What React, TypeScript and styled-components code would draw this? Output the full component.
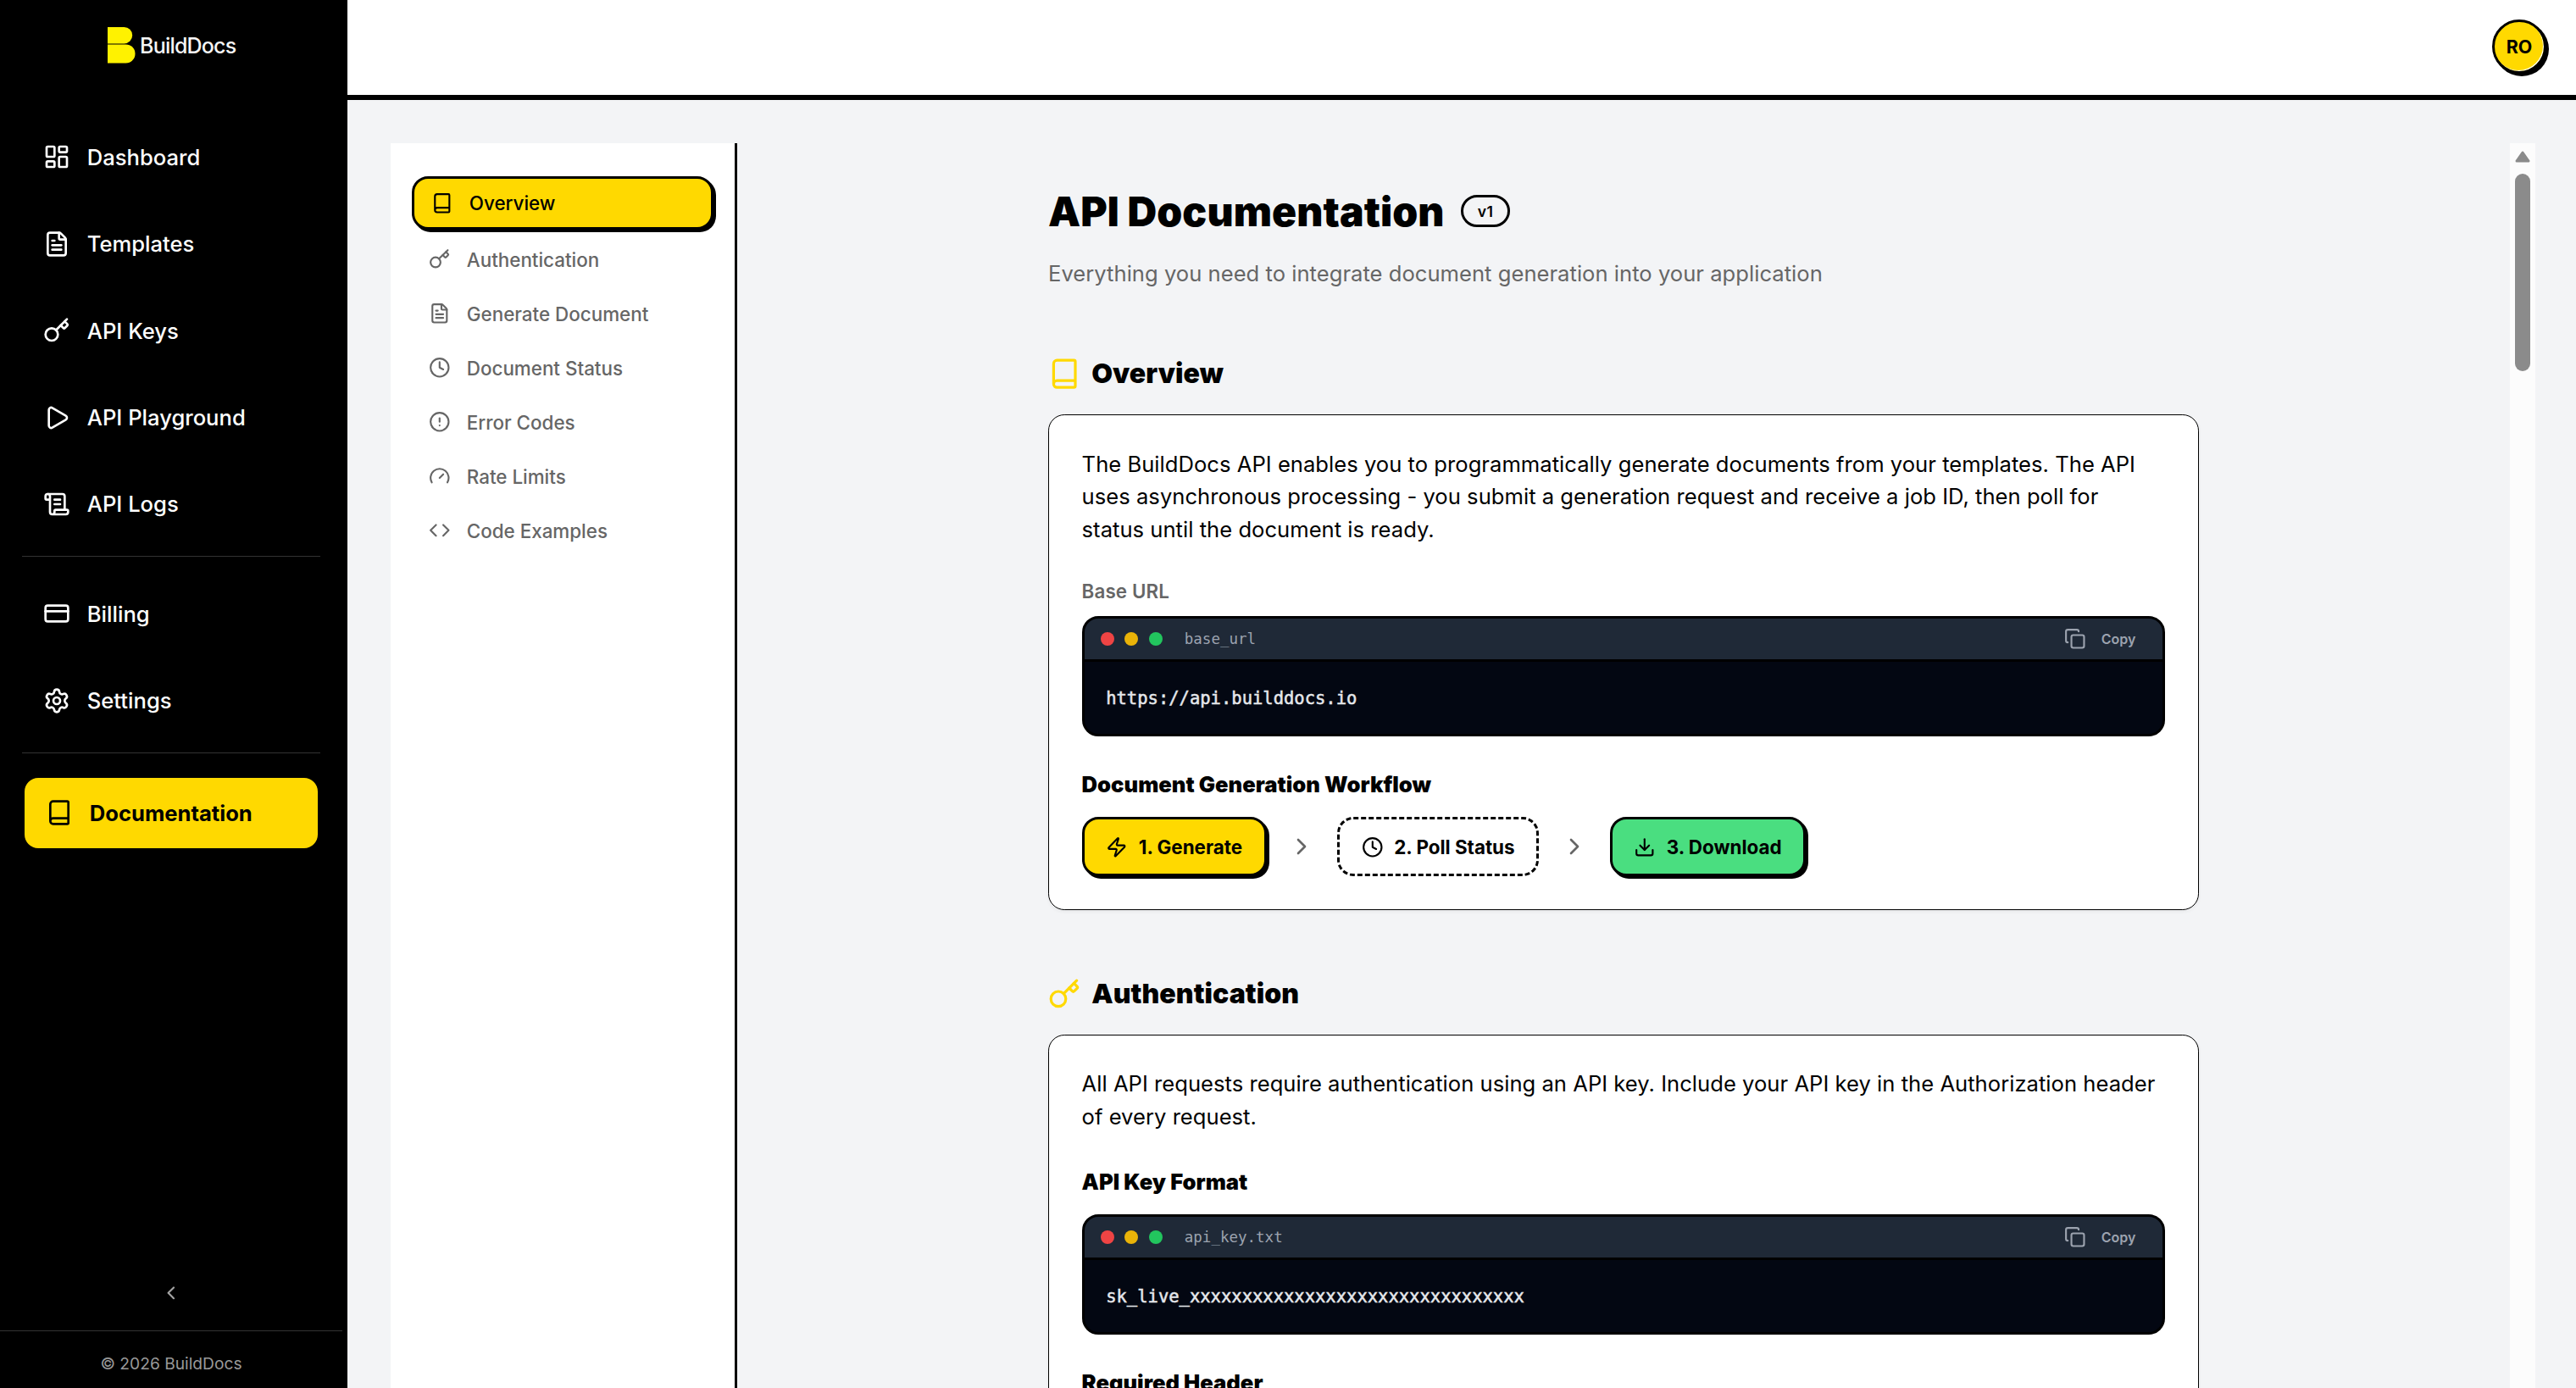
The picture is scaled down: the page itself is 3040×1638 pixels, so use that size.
import React from 'react'
import styled, { createGlobalStyle } from 'styled-components';
import {
  LayoutDashboard,
  FileText,
  Key,
  Play,
  ScrollText,
  CreditCard,
  Settings,
  Book,
  ChevronLeft,
  ChevronRight,
  Clock,
  CircleAlert,
  Gauge,
  Code,
  Copy,
  Zap,
  Download,
} from 'lucide-react';

const GlobalStyle = createGlobalStyle`
  * {
    box-sizing: border-box;
  }
  body {
    margin: 0;
    font-family: Inter, sans-serif;
    font-size: 25.6px;
    color: #000;
    background: #f3f4f6;
  }
  h1, h2, h3, p {
    margin: 0;
  }
  svg {
    flex-shrink: 0;
  }
`;

const Layout = styled.div`
  display: flex;
  height: 1638px;
  overflow: hidden;
`;

/* sidebar */
const Sidebar = styled.aside`
  width: 410px;
  flex-shrink: 0;
  display: flex;
  flex-direction: column;
  background: #000;
  color: #fff;
  border-right: 6px solid #000;
`;
const Brand = styled.div`
  display: flex;
  align-items: center;
  justify-content: center;
  gap: 5.5px;
  height: 107px;
  padding-left: 1px;
  font-size: 25px;
  font-weight: 500;
  letter-spacing: -0.8px;
  color: #f5f5f5;
`;
const Menu = styled.nav`
  flex-grow: 1;
  display: flex;
  flex-direction: column;
  gap: 19.2px;
  padding: 36.8px 26px 0;
`;
const MenuItem = styled.a<{ $active?: boolean }>`
  display: flex;
  align-items: center;
  flex-shrink: 0;
  gap: 20.2px;
  height: ${(p) => (p.$active ? '89px' : '83.2px')};
  padding: 0 24.6px;
  border: ${(p) => (p.$active ? '3px solid #000' : 'none')};
  border-radius: 19.2px;
  background: ${(p) => (p.$active ? '#ffd900' : 'transparent')};
  color: ${(p) => (p.$active ? '#000' : '#fff')};
  font-weight: ${(p) => (p.$active ? 700 : 500)};
`;
const MenuDivider = styled.div`
  height: 1px;
  flex-shrink: 0;
  margin-bottom: 6.9px;
  background: #333;
`;
const Collapse = styled.div`
  display: flex;
  justify-content: center;
  padding-bottom: 31px;
  color: #a3a3a3;
`;
const Copyright = styled.div`
  height: 68px;
  padding-top: 22px;
  border-top: 1px solid #333;
  font-size: 19.2px;
  line-height: 32px;
  text-align: center;
  color: #999;
`;

/* page */
const Page = styled.div`
  flex-grow: 1;
  min-width: 0;
  display: flex;
  flex-direction: column;
`;
const TopBar = styled.header`
  display: flex;
  align-items: center;
  justify-content: flex-end;
  flex-shrink: 0;
  height: 118px;
  padding: 0 35px 2px 0;
  background: #fff;
  border-bottom: 6px solid #000;
`;
const Avatar = styled.div`
  display: flex;
  align-items: center;
  justify-content: center;
  width: 64px;
  height: 64px;
  border: 3px solid #000;
  border-radius: 50%;
  box-shadow: 3px 3px 0 #000, inset -1px -1px 0 #fff;
  background: #ffd900;
  font-size: 21.4px;
  font-weight: 700;
`;
const Main = styled.main`
  flex-grow: 1;
  min-height: 0;
  display: flex;
  padding: 51px 48px 0 51px;
`;
const DocsNav = styled.nav`
  width: 409px;
  flex-shrink: 0;
  display: flex;
  flex-direction: column;
  gap: 6.4px;
  padding: 39px 25px 0;
  background: #fff;
  border-right: 3px solid #000;
`;
const DocsLink = styled.a<{ $active?: boolean }>`
  display: flex;
  align-items: center;
  flex-shrink: 0;
  gap: 19.2px;
  height: ${(p) => (p.$active ? '63px' : '57.6px')};
  padding: 0 20px;
  border: ${(p) => (p.$active ? '3px solid #000' : 'none')};
  border-radius: 19.2px;
  box-shadow: ${(p) => (p.$active ? '3px 3px 0 #000' : 'none')};
  background: ${(p) => (p.$active ? '#ffd900' : 'transparent')};
  color: ${(p) => (p.$active ? '#000' : '#666')};
  font-size: 22.4px;
  font-weight: 500;
`;
const Scroller = styled.div`
  flex-grow: 1;
  min-width: 0;
  height: 1469px;
  overflow: hidden;
`;
const Content = styled.div`
  width: 1358px;
  margin: 0 auto;
  padding-top: 51.6px;
`;
const ScrollTrack = styled.div`
  width: 30px;
  flex-shrink: 0;
  display: flex;
  flex-direction: column;
  align-items: center;
  gap: 13px;
  padding-top: 9px;
  background: #fcfcfc;
`;
const ScrollThumb = styled.div`
  width: 18px;
  height: 233px;
  border-radius: 9px;
  background: #8b8b8b;
`;

/* content */
const TitleRow = styled.div`
  display: flex;
  align-items: center;
  gap: 19.2px;
`;
const Title = styled.h1`
  font-size: 48px;
  line-height: 57.6px;
  font-weight: 900;
  letter-spacing: 0.08px;
`;
const Badge = styled.span`
  display: flex;
  align-items: center;
  height: 38px;
  padding: 0 17px;
  border: 3px solid #000;
  border-radius: 19px;
  font-size: 17.6px;
  font-weight: 600;
  letter-spacing: 0.4px;
`;
const Subtitle = styled.p`
  margin-top: 25.6px;
  line-height: 38.4px;
  letter-spacing: 0.02px;
  color: #666;
`;
const Section = styled.section`
  margin-top: 76.8px;
`;
const SectionTitle = styled.h2`
  display: flex;
  align-items: center;
  gap: 12.8px;
  font-size: 32px;
  line-height: 44.8px;
  font-weight: 900;
  letter-spacing: 0.06px;
  margin-bottom: 25.6px;
`;
const Card = styled.div`
  padding: 38.4px 38.6px;
  background: #fff;
  border: 1px solid #000;
  border-radius: 19.2px;
  box-shadow: 0 2px 4px rgba(0, 0, 0, 0.05);
`;
const Text = styled.p`
  line-height: 38.4px;
  letter-spacing: 0.02px;
`;
const Label = styled.div`
  margin: 38.4px 0 12.8px;
  font-size: 22.4px;
  line-height: 32px;
  font-weight: 600;
  letter-spacing: 0.1px;
  color: #666;
`;
const SubTitle = styled.h3`
  margin: 38.6px 0 18.7px;
  font-size: 25.6px;
  line-height: 38.4px;
  font-weight: 900;
`;
const CodeBox = styled.div`
  overflow: hidden;
  border: 3px solid #000;
  border-radius: 19.2px;
  background: #030712;
`;
const CodeHeader = styled.div`
  display: flex;
  align-items: center;
  height: 51px;
  padding: 0 32px 0 19px;
  background: #1f2937;
  border-bottom: 3px solid #000;
  color: #9ca3af;
`;
const Dots = styled.div`
  display: flex;
  gap: 12.8px;
  margin-right: 25.6px;
`;
const Dot = styled.span<{ $color: string }>`
  width: 16px;
  height: 16px;
  border-radius: 50%;
  background: ${(p) => p.$color};
`;
const FileName = styled.span`
  flex-grow: 1;
  font-family: 'DejaVu Sans Mono', monospace;
  font-size: 17.5px;
  line-height: 26px;
`;
const CopyButton = styled.div`
  display: flex;
  align-items: center;
  gap: 18px;
  font-size: 16px;
  font-weight: 600;
`;
const CodeBody = styled.div`
  height: 84.6px;
  padding: 0 25.6px;
  font-family: 'DejaVu Sans Mono', monospace;
  font-size: 20.5px;
  line-height: 86px;
  color: #e5e7eb;
  -webkit-text-stroke: 0.5px #e5e7eb;
`;
const Steps = styled.div`
  display: flex;
  align-items: center;
  gap: 25.6px;
  color: #666;
`;
const Step = styled.div<{ $bg?: string }>`
  display: flex;
  align-items: center;
  gap: 12.8px;
  height: 70px;
  padding: 0 25.8px;
  border: 3px ${(p) => (p.$bg ? 'solid' : 'dashed')} #000;
  border-radius: 19.2px;
  box-shadow: ${(p) => (p.$bg ? '3px 3px 0 #000' : 'none')};
  background: ${(p) => p.$bg || '#fff'};
  color: #000;
  font-size: 22.4px;
  font-weight: 700;
`;

const CodeBlock = ({ name, children }: { name: string; children: string }) => {
  return (
    <CodeBox>
      <CodeHeader>
        <Dots>
          <Dot $color="#ef4444" />
          <Dot $color="#eab308" />
          <Dot $color="#22c55e" />
        </Dots>
        <FileName>{name}</FileName>
        <CopyButton>
          <Copy size={25.6} />
          Copy
        </CopyButton>
      </CodeHeader>
      <CodeBody>{children}</CodeBody>
    </CodeBox>
  )
}

const mainLinks = [
  { label: 'Dashboard', icon: LayoutDashboard },
  { label: 'Templates', icon: FileText },
  { label: 'API Keys', icon: Key },
  { label: 'API Playground', icon: Play },
  { label: 'API Logs', icon: ScrollText },
];
const accountLinks = [
  { label: 'Billing', icon: CreditCard },
  { label: 'Settings', icon: Settings },
];
const docsLinks = [
  { label: 'Overview', icon: Book },
  { label: 'Authentication', icon: Key },
  { label: 'Generate Document', icon: FileText },
  { label: 'Document Status', icon: Clock },
  { label: 'Error Codes', icon: CircleAlert },
  { label: 'Rate Limits', icon: Gauge },
  { label: 'Code Examples', icon: Code },
];

const App = () => {
  return (
    <Layout>
      <GlobalStyle />
      <Sidebar>
        <Brand>
          <svg width="33" height="43" viewBox="0 0 33 43" fill="#fff200">
            <path d="M0 0h19.500a9.700 9.700 0 0 1 0 19.400H0z" />
            <path d="M0 20.400h21.500a11 11 0 0 1 0 22H0z" />
          </svg>
          BuildDocs
        </Brand>
        <Menu>
          {mainLinks.map(({ label, icon: Icon }) => (
            <MenuItem key={label}>
              <Icon size={32} />
              {label}
            </MenuItem>
          ))}
          <MenuDivider />
          {accountLinks.map(({ label, icon: Icon }) => (
            <MenuItem key={label}>
              <Icon size={32} />
              {label}
            </MenuItem>
          ))}
          <MenuDivider />
          <MenuItem $active>
            <Book size={32} />
            Documentation
          </MenuItem>
        </Menu>
        <Collapse>
          <ChevronLeft size={25.6} />
        </Collapse>
        <Copyright>© 2026 BuildDocs</Copyright>
      </Sidebar>
      <Page>
        <TopBar>
          <Avatar>RO</Avatar>
        </TopBar>
        <Main>
          <DocsNav>
            {docsLinks.map(({ label, icon: Icon }, i) => (
              <DocsLink key={label} $active={i === 0}>
                <Icon size={25.6} />
                {label}
              </DocsLink>
            ))}
          </DocsNav>
          <Scroller>
            <Content>
              <TitleRow>
                <Title>API Documentation</Title>
                <Badge>v1</Badge>
              </TitleRow>
              <Subtitle>Everything you need to integrate document generation into your application</Subtitle>
              <Section>
                <SectionTitle>
                  <Book size={38.4} color="#ffd900" />
                  Overview
                </SectionTitle>
                <Card>
                  <Text>
                    The BuildDocs API enables you to programmatically generate documents from your templates. The API
                    uses asynchronous processing - you submit a generation request and receive a job ID, then poll for{' '}
                    <br />
                    status until the document is ready.
                  </Text>
                  <Label>Base URL</Label>
                  <CodeBlock name="base_url">https://api.builddocs.io</CodeBlock>
                  <SubTitle>Document Generation Workflow</SubTitle>
                  <Steps>
                    <Step $bg="#ffd900">
                      <Zap size={25.6} />
                      1. Generate
                    </Step>
                    <ChevronRight size={32} />
                    <Step>
                      <Clock size={25.6} />
                      2. Poll Status
                    </Step>
                    <ChevronRight size={32} />
                    <Step $bg="#4ade80">
                      <Download size={25.6} />
                      3. Download
                    </Step>
                  </Steps>
                </Card>
              </Section>
              <Section>
                <SectionTitle>
                  <Key size={38.4} color="#ffd900" />
                  Authentication
                </SectionTitle>
                <Card>
                  <Text>
                    All API requests require authentication using an API key. Include your API key in the Authorization
                    header of every request.
                  </Text>
                  <SubTitle>API Key Format</SubTitle>
                  <CodeBlock name="api_key.txt">sk_live_xxxxxxxxxxxxxxxxxxxxxxxxxxxxxxxx</CodeBlock>
                  <SubTitle>Required Header</SubTitle>
                </Card>
              </Section>
            </Content>
          </Scroller>
          <ScrollTrack>
            <svg width="18" height="14" viewBox="0 0 18 14">
              <path d="M9 2L16 12H2z" fill="#8b8b8b" stroke="#8b8b8b" strokeWidth="3" strokeLinejoin="round" />
            </svg>
            <ScrollThumb />
          </ScrollTrack>
        </Main>
      </Page>
    </Layout>
  )
}

export default App
